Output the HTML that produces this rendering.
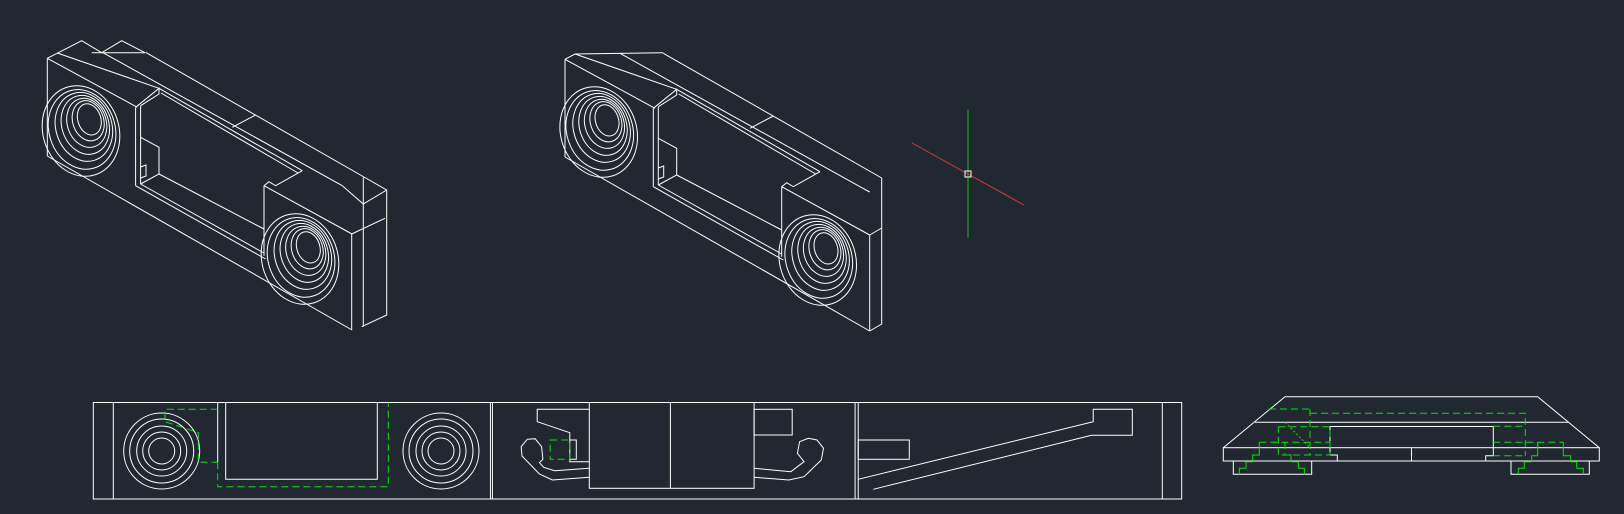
<!DOCTYPE html>
<html><head><meta charset="utf-8"><style>
html,body{margin:0;padding:0;background:#222831;}
svg{display:block}
</style></head><body>
<svg width="1624" height="514" viewBox="0 0 1624 514" xmlns="http://www.w3.org/2000/svg">
<rect width="1624" height="514" fill="#222831"/>
<defs>
<g id="rings">
<ellipse cx="0" cy="0" rx="38" ry="46"/>
<ellipse cx="1.5" cy="-1.2" rx="33" ry="40.5"/>
<ellipse cx="4" cy="-3" rx="28" ry="35"/>
<ellipse cx="6" cy="-4.5" rx="23.5" ry="30"/>
<ellipse cx="8" cy="-6" rx="19.5" ry="25"/>
<ellipse cx="10" cy="-7.5" rx="15.5" ry="20.5"/>
<ellipse cx="11.5" cy="-8.5" rx="11.5" ry="16"/>
</g>
<g id="body" fill="none" stroke="#fff" stroke-width="1">
<polyline points="47.3,58.3 47.3,156"/>
<polyline points="47.3,58.3 137.3,107.3"/>
<polyline points="57.3,53 159,88.3"/>
<polyline points="102.3,52.3 342.3,185.7"/>
<polyline points="145.6,52.3 364,177"/>
<polyline points="232.3,127.3 255.6,115"/>
<polyline points="159,88.3 302.3,170.7"/>
<polyline points="161,93 298,173"/>
<polyline points="135.6,107.3 135.6,185.7"/>
<polyline points="140.6,105.7 140.6,184"/>
<polyline points="135.6,185.7 265.6,259"/>
<polyline points="140.6,184 264,253"/>
<polyline points="159,174 264,229"/>
<polyline points="140.6,184 159,174 159,147.3 140.6,137.3"/>
<polyline points="140.6,167 146,165 146,176 140.6,178"/>
<polyline points="135.6,107.3 159,88.3 159,94 140.6,105.7"/>
<polyline points="264,255.7 264,185.7 269,181.7 275.6,185.7 302.3,170.7"/>
<polyline points="264,185.7 352,234"/>
<polyline points="47.3,156 352,330"/>
<g transform="translate(81,131) rotate(-18)"><use href="#rings"/></g>
<g transform="translate(300,259) rotate(-18)"><use href="#rings"/></g>
</g>
</defs>
<!-- part 1 -->
<use href="#body"/>
<g fill="none" stroke="#fff" stroke-width="1">
<polyline points="47.3,58.3 58.3,52.7 81.7,40.7 101.7,52.7 121.7,40.7 145,52.7"/>
<polyline points="91.7,52.7 145,52.7"/>
<polyline points="364,177 386.7,190 386.7,315 361.7,326.7"/>
<polyline points="363.3,176.7 363.3,326.7"/>
<polyline points="342.3,185.7 363.3,204 386.7,190"/>
<polyline points="351.7,234 385,218.3"/>
<polyline points="351.7,234 351.7,330"/>
</g>
<!-- part 2 -->
<g transform="translate(517.7,1)">
<use href="#body"/>
<g fill="none" stroke="#fff" stroke-width="1">
<polyline points="47.3,58.3 57.3,53 145.6,51.7"/>
<polyline points="364,177 364,323 352,330"/>
<polyline points="352,234 364,227"/>
<polyline points="352,234 352,330"/>
<polyline points="342.3,185.7 352,191"/>
</g>
</g>
<!-- crosshair -->
<line x1="968" y1="110" x2="968" y2="238" stroke="#1fb51f" stroke-width="1"/>
<line x1="912" y1="143" x2="1024" y2="205" stroke="#d03a3a" stroke-width="1"/>
<rect x="965" y="171" width="6" height="6" fill="none" stroke="#fff" stroke-width="1"/>

<!-- bottom front view -->
<g fill="none" stroke="#fff" stroke-width="1">
<rect x="93.3" y="402.5" width="1088.4" height="96.5"/>
<line x1="113.3" y1="402.5" x2="113.3" y2="499"/>
<circle cx="161.7" cy="451" r="38"/><circle cx="161.7" cy="451" r="32"/><circle cx="161.7" cy="451" r="25"/><circle cx="161.7" cy="451" r="19"/><circle cx="161.7" cy="451" r="13"/>
<circle cx="441" cy="451" r="38"/><circle cx="441" cy="451" r="32"/><circle cx="441" cy="451" r="25"/><circle cx="441" cy="451" r="19"/><circle cx="441" cy="451" r="13"/>
<line x1="217.7" y1="402.5" x2="217.7" y2="462"/>
<polyline points="225.7,402.5 225.7,479.3 377.3,479.3 377.3,402.5"/>
<line x1="490.4" y1="402.5" x2="490.4" y2="499"/>
<line x1="492.4" y1="402.5" x2="492.4" y2="499"/>
<rect x="589.3" y="402.5" width="164.8" height="85.8"/>
<line x1="670.4" y1="402.5" x2="670.4" y2="488.3"/>
<polyline points="589.3,409.3 537.2,409.3 537.2,421.7 569.8,432.7 569.8,461.7 589.3,461.7"/>
<polyline points="569.8,440 576.3,440 576.3,459.3 569.8,459.3"/>
<polyline points="589.3,468.3 554.6,470.7 543.7,467.3 539.4,462.7 542.9,459.3 541.6,446.7 535.1,438.7 527.2,439.3 521.2,446.7 522,456 539.4,474 552.4,480 589.3,477.3"/>
<rect x="754.1" y="409.3" width="38.1" height="25.7"/>
<polyline points="754.1,468.3 790.9,471.7 804,461.7 797.4,453.3 799.6,441.7 808.3,438.3 817,440 823.5,448.3 821.3,460 804,476.7 788.8,480 754.1,477.3"/>
<line x1="855.1" y1="402.5" x2="855.1" y2="499"/>
<line x1="858.2" y1="402.5" x2="858.2" y2="499"/>
<rect x="858.2" y="440" width="51.1" height="19.3"/>
<polyline points="858.2,479.3 1093.2,421.7 1093.2,409.3 1132.3,409.3 1132.3,435.3 1091.5,435.3 873.3,489.3"/>
<line x1="1162.3" y1="402.5" x2="1162.3" y2="499"/>
</g>
<g fill="none" stroke="#00e600" stroke-width="1" stroke-dasharray="7 4">
<polyline points="217.7,409.3 165,409.3 165,421.7 178.3,426 198.3,432.7 198.3,462.3 217.7,462.3"/>
<polyline points="217.7,462.3 217.7,486.7 388.3,486.7 388.3,402.5"/>
<rect x="550.2" y="440" width="19.6" height="19.3"/>
</g>

<!-- side view -->
<g fill="none" stroke="#fff" stroke-width="1">
<polyline points="1223.3,447.7 1285,396.7 1537.7,396.7 1599.3,447.7"/>
<line x1="1255" y1="422.3" x2="1568.3" y2="422.3"/>
<rect x="1223.3" y="447.7" width="376" height="13.3"/>
<line x1="1411.5" y1="447.7" x2="1411.5" y2="461"/>
<polyline points="1330,426.5 1330,455 1337.3,455 1337.3,461"/>
<polyline points="1493.3,426.5 1493.3,455.7 1485.7,455.7 1485.7,461"/>
<line x1="1330" y1="426.5" x2="1493.3" y2="426.5"/>
<polyline points="1233.3,461 1233.3,474.3 1311.7,474.3 1311.7,461"/>
<polyline points="1511,461 1511,474.3 1589.3,474.3 1589.3,461"/>
</g>
<g fill="none" stroke="#00e600" stroke-width="1">
<g stroke-dasharray="7 4">
<polyline points="1269,409 1310,409"/>
<polyline points="1310,413.3 1525.3,413.3 1525.3,455.7"/>
<line x1="1310" y1="409" x2="1310" y2="455"/>
<rect x="1278.3" y="426.7" width="51.7" height="28.3"/>
<line x1="1285" y1="442.3" x2="1285" y2="455"/>
<line x1="1259.3" y1="442.3" x2="1330" y2="442.3"/>
<line x1="1493.3" y1="426.3" x2="1525.3" y2="426.3"/>
<line x1="1493.3" y1="442.3" x2="1563.3" y2="442.3"/>
<line x1="1493.3" y1="455.7" x2="1525.3" y2="455.7"/>
<line x1="1537.7" y1="442.3" x2="1537.7" y2="455"/>
</g>
<line x1="1285" y1="422.3" x2="1310" y2="447.7" stroke-dasharray="2 2"/>
<polyline points="1259.3,442.3 1259.3,455 1252.7,455 1252.7,461.7 1246,461.7 1246,468.3 1239.3,468.3 1239.3,474.3"/>
<polyline points="1285,455 1291,455 1291,461.7 1298.3,461.7 1298.3,468.3 1304.3,468.3 1304.3,474.3"/>
<polyline points="1537.7,442.3 1537.7,455.7 1531.7,455.7 1531.7,461.7 1524.3,461.7 1524.3,468.3 1518.3,468.3 1518.3,474.3"/>
<polyline points="1563.3,442.3 1563.3,455.7 1570.7,455.7 1570.7,461.7 1576.7,461.7 1576.7,468.3 1583.3,468.3 1583.3,474.3"/>
</g>
</svg>
</body></html>
